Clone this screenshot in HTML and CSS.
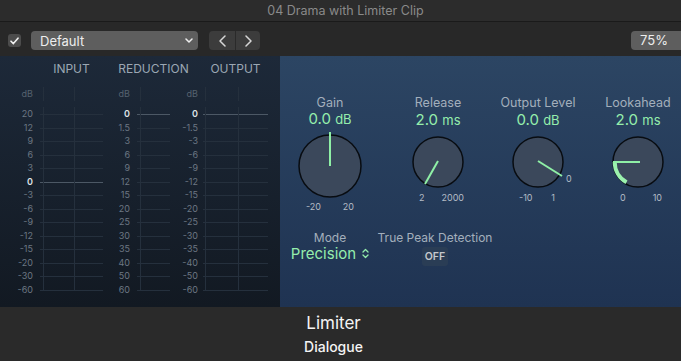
FILE: index.html
```html
<!DOCTYPE html>
<html lang="en">
<head>
    <meta charset="UTF-8">
    <meta name="viewport" content="width=device-width, initial-scale=1.0">
    <title>04 Drama with Limiter Clip</title>
    <link rel="stylesheet" href="styles.css">
</head>
<body>
    <div class="titlebar">04 Drama with Limiter Clip</div>

    <div class="toolbar">
        <span class="check">
            <svg width="9" height="8" viewBox="0 0 9 8"><path d="M1 4.2 L3.4 6.6 L8 1.2" fill="none" stroke="#f2f2f2" stroke-width="1.6" stroke-linecap="round" stroke-linejoin="round"/></svg>
        </span>
        <div class="preset">
            <span>Default</span>
            <svg width="8" height="5" viewBox="0 0 8 5"><path d="M1 1 L4 4 L7 1" fill="none" stroke="#eee" stroke-width="1.5" stroke-linecap="round" stroke-linejoin="round"/></svg>
        </div>
        <div class="nav">
            <button class="nav-btn"><svg width="7" height="12" viewBox="0 0 7 12"><path d="M6 1 L1 6 L6 11" fill="none" stroke="#d6d6d6" stroke-width="1.5" stroke-linecap="round" stroke-linejoin="round"/></svg></button>
            <button class="nav-btn"><svg width="7" height="12" viewBox="0 0 7 12"><path d="M1 1 L6 6 L1 11" fill="none" stroke="#d6d6d6" stroke-width="1.5" stroke-linecap="round" stroke-linejoin="round"/></svg></button>
        </div>
        <div class="zoom">75%</div>
    </div>

    <div class="plugin">
        <div class="meters">
            <div class="meter-group group-input">
                <div class="meter-title">INPUT</div>
                <div class="meter-row unit"><span class="scale">dB</span><span class="cell"></span></div>
                <div class="meter-row"><span class="scale">20</span><span class="cell"></span></div>
                <div class="meter-row"><span class="scale">12</span><span class="cell"></span></div>
                <div class="meter-row"><span class="scale">9</span><span class="cell"></span></div>
                <div class="meter-row"><span class="scale">6</span><span class="cell"></span></div>
                <div class="meter-row"><span class="scale">3</span><span class="cell"></span></div>
                <div class="meter-row zero"><span class="scale">0</span><span class="cell"></span></div>
                <div class="meter-row"><span class="scale">-3</span><span class="cell"></span></div>
                <div class="meter-row"><span class="scale">-6</span><span class="cell"></span></div>
                <div class="meter-row"><span class="scale">-9</span><span class="cell"></span></div>
                <div class="meter-row"><span class="scale">-12</span><span class="cell"></span></div>
                <div class="meter-row"><span class="scale">-15</span><span class="cell"></span></div>
                <div class="meter-row"><span class="scale">-20</span><span class="cell"></span></div>
                <div class="meter-row"><span class="scale">-30</span><span class="cell"></span></div>
                <div class="meter-row last"><span class="scale">-60</span><span class="cell"></span></div>
            </div>

            <div class="meter-group group-red">
                <div class="meter-title">REDUCTION</div>
                <div class="meter-row unit"><span class="scale">dB</span><span class="cell"></span></div>
                <div class="meter-row zero"><span class="scale">0</span><span class="cell"></span></div>
                <div class="meter-row"><span class="scale">1.5</span><span class="cell"></span></div>
                <div class="meter-row"><span class="scale">3</span><span class="cell"></span></div>
                <div class="meter-row"><span class="scale">6</span><span class="cell"></span></div>
                <div class="meter-row"><span class="scale">9</span><span class="cell"></span></div>
                <div class="meter-row"><span class="scale">12</span><span class="cell"></span></div>
                <div class="meter-row"><span class="scale">15</span><span class="cell"></span></div>
                <div class="meter-row"><span class="scale">20</span><span class="cell"></span></div>
                <div class="meter-row"><span class="scale">25</span><span class="cell"></span></div>
                <div class="meter-row"><span class="scale">30</span><span class="cell"></span></div>
                <div class="meter-row"><span class="scale">35</span><span class="cell"></span></div>
                <div class="meter-row"><span class="scale">40</span><span class="cell"></span></div>
                <div class="meter-row"><span class="scale">50</span><span class="cell"></span></div>
                <div class="meter-row last"><span class="scale">60</span><span class="cell"></span></div>
            </div>

            <div class="meter-group group-out">
                <div class="meter-title">OUTPUT</div>
                <div class="meter-row unit"><span class="scale">dB</span><span class="cell"></span></div>
                <div class="meter-row zero"><span class="scale">0</span><span class="cell"></span></div>
                <div class="meter-row"><span class="scale">-1.5</span><span class="cell"></span></div>
                <div class="meter-row"><span class="scale">-3</span><span class="cell"></span></div>
                <div class="meter-row"><span class="scale">-6</span><span class="cell"></span></div>
                <div class="meter-row"><span class="scale">-9</span><span class="cell"></span></div>
                <div class="meter-row"><span class="scale">-12</span><span class="cell"></span></div>
                <div class="meter-row"><span class="scale">-15</span><span class="cell"></span></div>
                <div class="meter-row"><span class="scale">-20</span><span class="cell"></span></div>
                <div class="meter-row"><span class="scale">-25</span><span class="cell"></span></div>
                <div class="meter-row"><span class="scale">-30</span><span class="cell"></span></div>
                <div class="meter-row"><span class="scale">-35</span><span class="cell"></span></div>
                <div class="meter-row"><span class="scale">-40</span><span class="cell"></span></div>
                <div class="meter-row"><span class="scale">-50</span><span class="cell"></span></div>
                <div class="meter-row last"><span class="scale">-60</span><span class="cell"></span></div>
            </div>
        </div>

        <div class="controls">
            <div class="knobs">
                <div class="knob knob-gain">
                    <div class="knob-label">Gain</div>
                    <div class="knob-value">0.0 <small>dB</small></div>
                    <svg class="dial" width="70" height="70" viewBox="0 0 70 70">
                        <circle cx="35" cy="35" r="31" class="dial-body"/>
                        <line x1="35" y1="35" x2="35" y2="1" class="dial-pointer"/>
                    </svg>
                    <div class="knob-scale"><span>-20</span><span>20</span></div>
                </div>

                <div class="knob knob-release">
                    <div class="knob-label">Release</div>
                    <div class="knob-value">2.0 <small>ms</small></div>
                    <svg class="dial" width="60" height="60" viewBox="0 0 60 60">
                        <circle cx="30" cy="30" r="25" class="dial-body"/>
                        <line x1="30" y1="29" x2="17" y2="52" class="dial-pointer"/>
                    </svg>
                    <div class="knob-scale"><span>2</span><span>2000</span></div>
                </div>

                <div class="knob knob-output">
                    <div class="knob-label">Output Level</div>
                    <div class="knob-value">0.0 <small>dB</small></div>
                    <div class="dial-wrap">
                        <svg class="dial" width="60" height="60" viewBox="0 0 60 60">
                            <circle cx="30" cy="30" r="25" class="dial-body"/>
                            <line x1="30" y1="29" x2="54" y2="44" class="dial-pointer"/>
                        </svg>
                        <span class="dial-mark">0</span>
                    </div>
                    <div class="knob-scale"><span>-10</span><span>1</span></div>
                </div>

                <div class="knob knob-look">
                    <div class="knob-label">Lookahead</div>
                    <div class="knob-value">2.0 <small>ms</small></div>
                    <svg class="dial" width="60" height="60" viewBox="0 0 60 60">
                        <circle cx="30" cy="30" r="25" class="dial-body"/>
                        <path d="M18.5 50.3 A23.3 23.3 0 0 1 6.7 30" class="dial-arc"/>
                        <line x1="32" y1="30" x2="5" y2="30" class="dial-pointer"/>
                    </svg>
                    <div class="knob-scale"><span>0</span><span>10</span></div>
                </div>
            </div>

            <div class="options">
                <div class="option option-mode">
                    <div class="knob-label">Mode</div>
                    <div class="mode-value">
                        <span>Precision</span>
                        <svg width="7" height="11" viewBox="0 0 7 11"><path d="M1 4 L3.5 1.5 L6 4 M1 7 L3.5 9.5 L6 7" fill="none" stroke="#93ecab" stroke-width="1.3" stroke-linecap="round" stroke-linejoin="round"/></svg>
                    </div>
                </div>
                <div class="option option-peak">
                    <div class="knob-label">True Peak Detection</div>
                    <button class="toggle">OFF</button>
                </div>
            </div>
        </div>
    </div>

    <div class="footer">
        <div class="footer-title">Limiter</div>
        <div class="footer-sub">Dialogue</div>
    </div>
</body>
</html>
```

FILE: styles.css
```css
body {
    margin: 0;
    width: 681px;
    height: 361px;
    overflow: hidden;
    background-color: #2a2a2a;
    font-family: Inter, "Noto Sans", sans-serif;
}

/* window chrome */

.titlebar {
    height: 21px;
    line-height: 22px;
    padding-left: 10px;
    text-align: center;
    font-size: 12.5px;
    color: #8a8a8a;
    background-color: #2c2c2c;
    border-bottom: 1px solid #1a1a1a;
}

.toolbar {
    height: 34px;
    box-sizing: border-box;
    padding: 3px 0 0 8px;
    display: flex;
    align-items: center;
    background-color: #282828;
}

.check {
    width: 13px;
    height: 13px;
    border-radius: 3px;
    background-color: #4c4c4c;
    display: flex;
    align-items: center;
    justify-content: center;
}

.preset {
    width: 167px;
    height: 19px;
    margin-left: 10px;
    box-sizing: border-box;
    padding: 0 5px 0 9px;
    border-radius: 4px;
    background-color: #5e5e5e;
    display: flex;
    align-items: center;
    justify-content: space-between;
    font-size: 13px;
    color: #ededed;
}

.nav {
    margin-left: 11px;
    display: flex;
    height: 19px;
    border-radius: 4px;
    overflow: hidden;
    background-color: #3c3c3c;
}

.nav-btn {
    width: 26px;
    height: 19px;
    padding: 0;
    border: none;
    background: none;
    display: flex;
    align-items: center;
    justify-content: center;
}

.nav-btn + .nav-btn {
    border-left: 1px solid #2a2a2a;
    width: 25px;
}

.zoom {
    margin-left: auto;
    width: 50px;
    height: 19px;
    line-height: 19px;
    box-sizing: border-box;
    padding-left: 9px;
    border-radius: 4px 0 0 4px;
    background-color: #5e5e5e;
    font-size: 13px;
    color: #ededed;
}

/* plugin body */

.plugin {
    height: 251px;
    display: flex;
}

.meters {
    width: 280px;
    flex: none;
    box-sizing: border-box;
    padding: 4px 0 0 8px;
    display: flex;
    background: linear-gradient(#1d2939, #121922);
    --grid: #25303d;
}

.meter-group {
    display: flex;
    flex-direction: column;
}

.group-input {
    --scale: 25px;
    --gap: 7px;
    --meter: 63px;
    --v1: 3px;
    --v2: 34px;
}

.group-red {
    margin-left: 5px;
    --scale: 22px;
    --gap: 7px;
    --meter: 33px;
    --v1: 3px;
    --v2: 3px;
}

.group-out {
    margin-left: 4px;
    --scale: 24px;
    --gap: 5px;
    --meter: 65px;
    --v1: 2px;
    --v2: 35px;
}

.meter-title {
    height: 17px;
    line-height: 17px;
    width: var(--meter);
    margin-left: calc(var(--scale) + var(--gap));
    margin-bottom: 10.25px;
    display: flex;
    justify-content: center;
    white-space: nowrap;
    font-size: 12px;
    color: #9ba7b3;
}

.meter-row {
    height: 13.5px;
    display: flex;
    gap: var(--gap);
}

.unit {
    margin-bottom: 6.5px;
}

.scale {
    width: var(--scale);
    text-align: right;
    font-size: 9px;
    line-height: 13.5px;
    color: #6c7783;
}

.unit .scale {
    color: #56626f;
}

.zero .scale {
    color: #dfe3e7;
    font-weight: 600;
}

.cell {
    width: var(--meter);
    background:
        linear-gradient(var(--grid), var(--grid)) var(--v1) 0 / 1px 100% no-repeat,
        linear-gradient(var(--grid), var(--grid)) var(--v2) 0 / 1px 100% no-repeat,
        linear-gradient(var(--grid), var(--grid)) 0 7px / 100% 1px no-repeat;
}

.unit .cell {
    background-size: 1px 100%, 1px 100%, 0 0;
}

.last .cell {
    background-size: 1px 8px, 1px 8px, 100% 1px;
}

.zero .cell {
    background:
        linear-gradient(var(--grid), var(--grid)) var(--v1) 0 / 1px 100% no-repeat,
        linear-gradient(var(--grid), var(--grid)) var(--v2) 0 / 1px 100% no-repeat,
        linear-gradient(#4c5865, #4c5865) 0 7px / 100% 1px no-repeat;
}

/* controls */

.controls {
    flex: 1;
    overflow: hidden;
    background: linear-gradient(#2c4563, #1f3352);
}

.knobs {
    display: flex;
    align-items: flex-start;
    padding-top: 39px;
}

.knob {
    width: 100px;
    flex: none;
    display: flex;
    flex-direction: column;
    align-items: center;
}

.knob-release {
    margin-left: 8px;
}

.knob-label {
    font-size: 12.5px;
    line-height: 15px;
    color: #a3afbc;
    white-space: nowrap;
}

.knob-value {
    font-size: 15px;
    line-height: 18px;
    color: #95eeac;
}

.knob-value small {
    font-size: 13px;
}

.knob-gain .dial {
    margin-top: 3px;
}

.knob-release .knob-value,
.knob-output .knob-value,
.knob-look .knob-value {
    margin-top: 1px;
}

.knob-release .dial,
.knob-look .dial,
.dial-wrap {
    margin-top: 3px;
}

.dial-body {
    fill: #3b485b;
    stroke: #080c11;
    stroke-width: 1.5;
}

.dial-pointer {
    stroke: #8ff0a6;
    stroke-width: 2;
}

.dial-arc {
    fill: none;
    stroke: #9bf2ae;
    stroke-width: 4;
}

.dial-wrap {
    position: relative;
    height: 60px;
}

.dial-mark {
    position: absolute;
    left: 58px;
    top: 41px;
    font-size: 9px;
    color: #b4bcc6;
}

.knob-scale {
    display: flex;
    justify-content: space-between;
    font-size: 9px;
    line-height: 11px;
    color: #b4bcc6;
}

.knob-gain .knob-scale {
    width: 48px;
}

.knob-release .knob-scale {
    width: 45px;
    margin-left: 7px;
}

.knob-output .knob-scale {
    width: 36px;
    margin-left: -2px;
}

.knob-look .knob-scale {
    width: 42px;
    margin-left: 6px;
}

.options {
    display: flex;
    margin-top: 17.5px;
}

.option {
    display: flex;
    flex-direction: column;
    align-items: center;
}

.option .knob-label {
    font-size: 12px;
}

.option-mode {
    width: 100px;
}

.option-peak {
    width: 110px;
}

.mode-value {
    display: flex;
    align-items: center;
    gap: 6px;
    font-size: 15px;
    line-height: 18px;
    color: #95eeac;
}

.toggle {
    margin-top: 2.5px;
    width: 26px;
    height: 19px;
    padding: 0;
    border: none;
    border-radius: 3px;
    background-color: #2a3d55;
    font-family: inherit;
    font-size: 10.5px;
    font-weight: 600;
    color: #c4c8cc;
}

/* footer */

.footer {
    height: 54px;
    box-sizing: border-box;
    padding: 6px 14px 0 0;
    text-align: center;
    color: #f4f4f4;
}

.footer-title {
    font-size: 17px;
    line-height: 20px;
}

.footer-sub {
    margin-top: 5px;
    font-size: 14px;
    line-height: 18px;
    font-weight: 500;
}
```
